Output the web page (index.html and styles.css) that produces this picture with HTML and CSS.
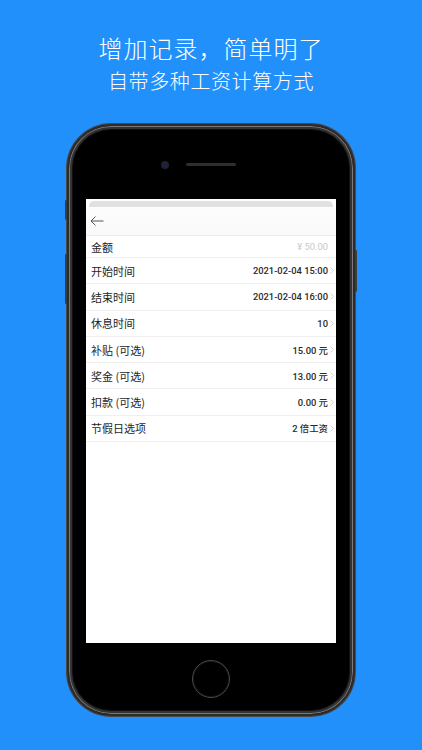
FILE: index.html
```html
<!DOCTYPE html>
<html lang="zh-CN">
<head>
<meta charset="utf-8">
<title>增加记录</title>
<link rel="stylesheet" href="styles.css">
</head>
<body>
<div class="page">
  <header class="hero">
    <h1 class="hero-title">增加记录，简单明了</h1>
    <p class="hero-sub">自带多种工资计算方式</p>
  </header>

  <div class="phone">
    <span class="btn btn-left1"></span>
    <span class="btn btn-left2"></span>
    <span class="btn btn-right"></span>
    <div class="phone-top">
      <span class="camera"></span>
      <span class="speaker"></span>
      <span></span>
    </div>
    <div class="screen">
      <div class="sheet-tab"></div>
      <div class="nav">
        <svg class="back" width="14" height="10" viewBox="0 0 14 10">
          <path d="M13.5 5H1M5.5 0.6L1 5l4.5 4.4" fill="none" stroke="#555" stroke-width="1"/>
        </svg>
      </div>
      <ul class="list">
        <li class="row row-first"><span class="label">金额</span><span class="value muted">¥ 50.00</span><svg class="chev hidden" width="4" height="7" viewBox="0 0 4 7"><path d="M0.5 0.5L3.5 3.5L0.5 6.5" fill="none" stroke="#c6c6c6" stroke-width="0.8"/></svg></li>
        <li class="row"><span class="label">开始时间</span><span class="value">2021-02-04 15:00</span><svg class="chev" width="4" height="7" viewBox="0 0 4 7"><path d="M0.5 0.5L3.5 3.5L0.5 6.5" fill="none" stroke="#c6c6c6" stroke-width="0.8"/></svg></li>
        <li class="row"><span class="label">结束时间</span><span class="value">2021-02-04 16:00</span><svg class="chev" width="4" height="7" viewBox="0 0 4 7"><path d="M0.5 0.5L3.5 3.5L0.5 6.5" fill="none" stroke="#c6c6c6" stroke-width="0.8"/></svg></li>
        <li class="row"><span class="label">休息时间</span><span class="value">10</span><svg class="chev" width="4" height="7" viewBox="0 0 4 7"><path d="M0.5 0.5L3.5 3.5L0.5 6.5" fill="none" stroke="#c6c6c6" stroke-width="0.8"/></svg></li>
        <li class="row"><span class="label">补贴 (可选)</span><span class="value">15.00 元</span><svg class="chev" width="4" height="7" viewBox="0 0 4 7"><path d="M0.5 0.5L3.5 3.5L0.5 6.5" fill="none" stroke="#c6c6c6" stroke-width="0.8"/></svg></li>
        <li class="row"><span class="label">奖金 (可选)</span><span class="value">13.00 元</span><svg class="chev" width="4" height="7" viewBox="0 0 4 7"><path d="M0.5 0.5L3.5 3.5L0.5 6.5" fill="none" stroke="#c6c6c6" stroke-width="0.8"/></svg></li>
        <li class="row"><span class="label">扣款 (可选)</span><span class="value">0.00 元</span><svg class="chev" width="4" height="7" viewBox="0 0 4 7"><path d="M0.5 0.5L3.5 3.5L0.5 6.5" fill="none" stroke="#c6c6c6" stroke-width="0.8"/></svg></li>
        <li class="row"><span class="label">节假日选项</span><span class="value">2 倍工资</span><svg class="chev" width="4" height="7" viewBox="0 0 4 7"><path d="M0.5 0.5L3.5 3.5L0.5 6.5" fill="none" stroke="#c6c6c6" stroke-width="0.8"/></svg></li>
      </ul>
    </div>
    <div class="phone-bottom">
      <span class="home"></span>
    </div>
  </div>
</div>
</body>
</html>
```

FILE: styles.css
```css
* { box-sizing: border-box; }
html, body {
  margin: 0;
  padding: 0;
}
body {
  width: 422px;
  height: 750px;
  overflow: hidden;
  background: #2190fb;
  font-family: "Liberation Sans", "Noto Sans CJK SC", sans-serif;
}
.page {
  display: flex;
  flex-direction: column;
  align-items: center;
}
.hero {
  padding-top: 31px;
  text-align: center;
  color: #fff;
}
.hero-title {
  margin: 0;
  font-family: "Noto Sans CJK SC", sans-serif;
  font-weight: 300;
  font-size: 24px;
  line-height: 34px;
  letter-spacing: 1px;
}
.hero-sub {
  margin: 2px 0 0;
  font-family: "Noto Sans CJK SC", sans-serif;
  font-weight: 300;
  font-size: 20px;
  line-height: 28px;
  letter-spacing: 0.6px;
}

/* phone */
.phone {
  position: relative;
  margin-top: 29px;
  width: 288px;
  height: 592px;
  border-radius: 44px;
  background: #000;
  border: 2px solid #2c2c2c;
  box-shadow: inset 0 0 0 1px #7a7a7a, inset 0 0 0 3px #333, inset 0 0 0 4px #111, 0 0 0 1px #4a4a4a;
  display: flex;
  flex-direction: column;
  padding: 0 17px;
}
.btn {
  position: absolute;
  width: 2px;
  background: #3c3c3c;
  border-radius: 1px;
}
.btn-left1 { left: -4px; top: 74px; height: 20px; }
.btn-left2 { left: -4px; top: 128px; height: 50px; }
.btn-right { right: -4px; top: 124px; height: 42px; }

.phone-top {
  height: 73px;
  display: grid;
  grid-template-columns: 1fr auto 1fr;
  align-items: center;
  padding-top: 4px;
}
.camera {
  justify-self: end;
  margin-right: 18px;
  width: 6px;
  height: 6px;
  border-radius: 50%;
  background: #1b2340;
  box-shadow: 0 0 0 1px #222;
}
.speaker {
  width: 50px;
  height: 3px;
  border-radius: 2px;
  background: #2e2e2e;
}

.screen {
  height: 444px;
  background: #fff;
  display: flex;
  flex-direction: column;
}
.sheet-tab {
  margin: 2px 3px 0;
  height: 6px;
  background: #e1e1e1;
  border-radius: 5px 5px 0 0;
}
.nav {
  height: 29px;
  display: flex;
  align-items: center;
  padding-left: 4px;
  border-bottom: 1px solid #ececec;
  background: linear-gradient(#fdfdfd, #f9f9f9);
}
.back { display: block; }

.list {
  list-style: none;
  margin: 0;
  padding: 0;
}
.row {
  height: 26.3px;
  display: flex;
  align-items: center;
  padding: 0 2px 0 5px;
  border-bottom: 1px solid #efefef;
}
.row-first { height: 22px; }
.label {
  flex: 1;
  font-family: "Noto Sans CJK SC", sans-serif;
  font-size: 11px;
  color: #1e1e1e;
}
.value {
  font-family: Roboto, "Noto Sans CJK SC", sans-serif;
  font-size: 9.4px;
  font-weight: 500;
  color: #2a2a2a;
}
.value.muted {
  font-weight: 400;
  color: #c9c9c9;
}
.chev {
  display: block;
  margin-left: 2px;
  flex: none;
}
.chev.hidden { visibility: hidden; }

.phone-bottom {
  flex: 1;
  display: flex;
  justify-content: center;
  padding-top: 17px;
}
.home {
  width: 38px;
  height: 38px;
  border-radius: 50%;
  border: 1.5px solid #4a4a4a;
  box-shadow: inset 0 0 0 1px #111;
}
```
